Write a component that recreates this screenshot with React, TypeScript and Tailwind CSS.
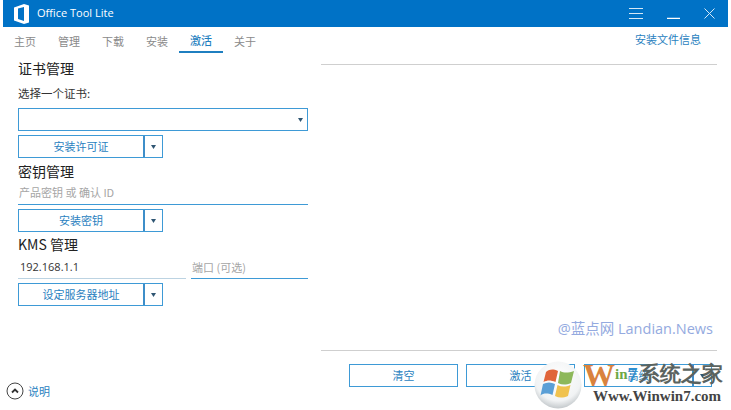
const splitClass = "flex h-[23px] w-[145px] border border-[#3e9ad6] bg-white text-[11px] text-[#2a7fc0]";

function SplitButton({ label }: { label: string }) {
  return (
    <div className={splitClass}>
      <div className="flex flex-1 items-center justify-center border-r-2 border-[#3e8ec9]">{label}</div>
      <div className="flex w-[17px] items-center justify-center">
        <Caret />
      </div>
    </div>
  );
}

function Caret() {
  return (
    <svg width="5" height="4" viewBox="0 0 5 4">
      <path d="M0 0h5L2.500 4z" fill="#2f5673" />
    </svg>
  );
}

function Heading({ children }: { children: React.ReactNode }) {
  return <div className="h-[20px] text-[14px] leading-[20px] text-[#222]">{children}</div>;
}

function WinLogo() {
  return (
    <svg width="48" height="48" viewBox="0 0 48 48">
      <defs>
        <radialGradient id="orb" cx="50%" cy="35%" r="65%">
          <stop offset="0%" stopColor="#ffffff" />
          <stop offset="75%" stopColor="#f1f3f4" />
          <stop offset="100%" stopColor="#c4c9cc" />
        </radialGradient>
      </defs>
      <circle cx="24" cy="24" r="23.5" fill="url(#orb)" />
      <path d="M12 11c4-3 7-3 12-1l-2.500 11c-5-2-8-2-12 0z" fill="#e0653a" />
      <path d="M26 10c4 2 8 2 14 0l-3 12c-5 2-9 2-13 0z" fill="#8db85a" />
      <path d="M9 23c4-2 8-2 12 0l-2.500 11c-5-2-9-2-12 .5z" fill="#5a9fd6" />
      <path d="M23.500 24c4 2 8 2 13 0l-2.500 11c-5 2-9 2-13 0z" fill="#f0c24e" />
    </svg>
  );
}

export default function App() {
  return (
    <div className="relative flex h-[410px] w-[731px] flex-col overflow-hidden bg-white px-[3px] font-['Noto_Sans_CJK_SC','Noto_Sans',sans-serif]">
      {/* title bar */}
      <div className="flex h-[27px] shrink-0 items-center bg-[#0072c6] pl-[11px] pr-[13px] text-white">
        <svg width="16" height="20" viewBox="0 0 16 20">
          <path d="M0 3.5 10 0l5 1.500v17L10 20 0 16.500zM10 3 4 4.500v10.500l6 2z" fill="#fff" fillRule="evenodd" />
        </svg>
        <span className="ml-[7px] font-['Open_Sans',sans-serif] text-[11px]">Office Tool Lite</span>
        <div className="ml-auto flex items-center gap-[24px]">
          <svg width="14" height="11" viewBox="0 0 14 11" stroke="#d5e8f6" strokeWidth="1">
            <path d="M0 .5h14M0 5.500h14M0 10.500h14" />
          </svg>
          <svg width="13" height="11" viewBox="0 0 13 11" stroke="#fff" strokeWidth="1.500">
            <path d="M0 10.500h13" />
          </svg>
          <svg width="11" height="11" viewBox="0 0 11 11" stroke="#d5e8f6" strokeWidth="1">
            <path d="M.5.500l10 10M10.500.500l-10 10" />
          </svg>
        </div>
      </div>

      {/* tabs */}
      <div className="flex h-[26px] shrink-0 items-stretch pr-[27px] text-[11px] text-[#8a8a8a]">
        {["主页", "管理", "下载", "安装", "激活", "关于"].map((t) => (
          <div
            key={t}
            className={
              t === "激活"
                ? "flex w-[44px] items-center justify-center border-b-2 border-[#1f7fc0] pt-[2px] font-medium text-[#1f7fc0]"
                : "flex w-[44px] items-center justify-center pt-[2px]"
            }
          >
            {t}
          </div>
        ))}
        <div className="ml-auto flex items-center pb-[1px] text-[#2a7fc0]">安装文件信息</div>
      </div>

      <div className="flex min-h-0 flex-1 pl-[15px]">
        {/* left column */}
        <div className="flex w-[290px] shrink-0 flex-col pt-[5px]">
          <Heading>证书管理</Heading>
          <div className="mt-[7px] h-[17px] text-[11.500px] leading-[17px] text-[#333]">选择一个证书:</div>
          <div className="mt-[6px] flex h-[23px] items-center justify-end border border-[#3e9ad6] pr-[4px]">
            <Caret />
          </div>
          <div className="mt-[4px]">
            <SplitButton label="安装许可证" />
          </div>
          <div className="mt-[3px]">
            <Heading>密钥管理</Heading>
          </div>
          <div className="flex h-[24px] items-center border-b border-[#3e9ad6] pl-[1px] text-[11px] text-[#a5a5a5]">产品密钥 或 确认 ID</div>
          <div className="mt-[4px]">
            <SplitButton label="安装密钥" />
          </div>
          <div className="mt-[2px]">
            <Heading>KMS 管理</Heading>
          </div>
          <div className="mt-[2px] flex gap-[5px] text-[11px]">
            <div className="flex h-[23px] flex-1 items-center border-b border-[#bcd3e2] pl-[2px] font-['Open_Sans',sans-serif] text-[#333]">192.168.1.1</div>
            <div className="flex h-[23px] w-[117px] items-center border-b border-[#3e9ad6] pl-[1px] text-[#a5a5a5]">端口 (可选)</div>
          </div>
          <div className="mt-[4px]">
            <SplitButton label="设定服务器地址" />
          </div>
          <div className="mt-auto mb-[10px] -ml-[12px] flex items-center gap-[4px] text-[11px] text-[#2a7fc0]">
            <svg width="18" height="18" viewBox="0 0 18 18" fill="none">
              <circle cx="9" cy="9" r="8" stroke="#444" strokeWidth="1" />
              <path d="M6 10.500 9 7.500l3 3" stroke="#333" strokeWidth="1.800" />
            </svg>
            说明
          </div>
        </div>

        {/* right column */}
        <div className="ml-[13px] flex w-[396px] shrink-0 flex-col">
          <div className="mt-[11px] h-[1px] shrink-0 bg-[#cfcfcf]" />
          <div className="mt-auto pr-[4px] text-right font-['Open_Sans',sans-serif] text-[14.500px] leading-[20px] text-[#94aae0]">
            @<span className="font-['Noto_Sans_CJK_SC',sans-serif]">蓝点网</span> Landian.News
          </div>
          <div className="mt-[11px] h-[1px] shrink-0 bg-[#cfcfcf]" />
          <div className="mt-[13px] mb-[23px] flex pl-[28px] text-[11px] text-[#2a7fc0]">
            <div className="flex h-[23px] w-[109px] items-center justify-center border border-[#3e9ad6]">清空</div>
            <div className="ml-[8px] flex h-[23px] w-[109px] items-center justify-center border border-[#3e9ad6]">激活</div>
            <div className="ml-[9px] flex h-[23px] w-[128px] border border-[#3e9ad6]">
              <div className="flex flex-1 items-center justify-center border-r-2 border-[#3e8ec9]">高级</div>
              <div className="flex w-[17px] items-center justify-center">
                <Caret />
              </div>
            </div>
          </div>
        </div>
      </div>

      {/* site watermark over the corner */}
      <div className="absolute left-[534px] top-[361px] flex">
        <WinLogo />
        <div className="ml-[1px] flex flex-col">
          <div className="flex h-[27px] items-center font-['Liberation_Serif',serif] font-bold">
            <span className="text-[32px] leading-none text-[#d9823e]">W</span>
            <span className="text-[15px] leading-none text-[#6ea845]">in</span>
            <span className="text-[20px] leading-none text-[#2f8fd0]">7</span>
            <span className="ml-[1px] text-[21px] leading-none text-[#5a6360]">系统之家</span>
          </div>
          <div className="ml-[10px] font-['Liberation_Serif',serif] text-[15px] font-bold leading-[17px] text-[#444]">Www.Winwin7.com</div>
        </div>
      </div>
    </div>
  );
}
